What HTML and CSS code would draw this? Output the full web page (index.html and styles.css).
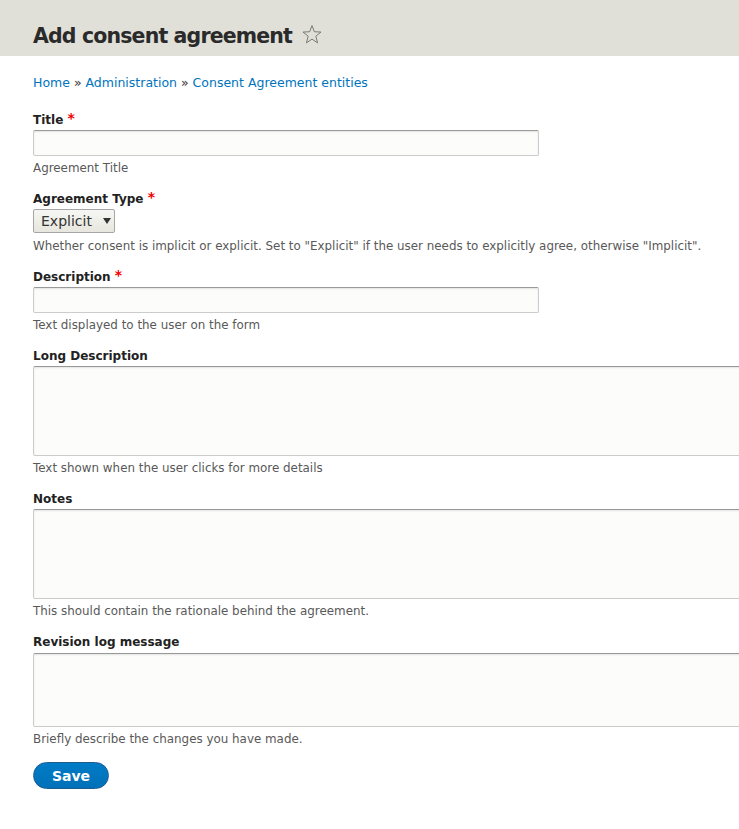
FILE: index.html
```html
<!DOCTYPE html>
<html lang="en">
<head>
<meta charset="utf-8">
<title>Add consent agreement</title>
<link rel="stylesheet" href="styles.css">
</head>
<body>
<header class="page-header">
  <h1 class="page-title">Add consent agreement <svg class="star" width="20" height="19" viewBox="0 0 20 19" aria-hidden="true"><polygon points="10,0.6 12.35,6.76 19.03,7.06 13.8,11.24 15.58,17.9 10,14.1 4.42,17.9 6.2,11.24 0.97,7.06 7.65,6.76" fill="none" stroke="#7a7a74" stroke-width="1" stroke-linejoin="miter"/></svg></h1>
</header>
<main class="content">
  <nav class="breadcrumb"><a href="#">Home</a> » <a href="#">Administration</a> » <a href="#">Consent Agreement entities</a></nav>
  <form class="form">
    <div class="form-item">
      <label class="label">Title <span class="req">*</span></label>
      <input class="text-input" type="text">
      <div class="desc">Agreement Title</div>
    </div>
    <div class="form-item">
      <label class="label">Agreement Type <span class="req">*</span></label>
      <div class="select"><span>Explicit</span><span class="arrow"></span></div>
      <div class="desc desc-after-select">Whether consent is implicit or explicit. Set to "Explicit" if the user needs to explicitly agree, otherwise "Implicit".</div>
    </div>
    <div class="form-item">
      <label class="label">Description <span class="req">*</span></label>
      <input class="text-input" type="text">
      <div class="desc">Text displayed to the user on the form</div>
    </div>
    <div class="form-item">
      <label class="label">Long Description</label>
      <textarea class="textarea tall"></textarea>
      <div class="desc">Text shown when the user clicks for more details</div>
    </div>
    <div class="form-item">
      <label class="label">Notes</label>
      <textarea class="textarea tall"></textarea>
      <div class="desc">This should contain the rationale behind the agreement.</div>
    </div>
    <div class="form-item">
      <label class="label label-last">Revision log message</label>
      <textarea class="textarea short"></textarea>
      <div class="desc">Briefly describe the changes you have made.</div>
    </div>
    <button class="save" type="button">Save</button>
  </form>
</main>
</body>
</html>
```
FILE: styles.css
```css
html, body {
  margin: 0;
  padding: 0;
  overflow: hidden;
  background: #fff;
  font-family: "DejaVu Sans", Verdana, sans-serif;
  color: #222;
}
.page-header {
  background: #e0e0d8;
  height: 56px;
  padding: 0 33px;
  box-sizing: border-box;
}
.page-title {
  margin: 0;
  padding-top: 21px;
  font-size: 20.5px;
  letter-spacing: -0.85px;
  font-weight: bold;
  color: #2a2a2a;
  line-height: 30px;
}
.star {
  vertical-align: -1px;
  margin-left: 4px;
}
.content {
  padding: 0 0 0 33px;
}
.breadcrumb {
  margin-top: 18px;
  font-size: 12.5px;
  line-height: 18px;
  color: #333;
}
.breadcrumb a {
  color: #0074bd;
  text-decoration: none;
}
.form {
  margin-top: 19px;
}
.form-item {
  margin-bottom: 14px;
}
.label {
  display: block;
  box-sizing: border-box;
  font-size: 12px;
  font-weight: bold;
  line-height: 16px;
  height: 17px;
  padding-top: 1px;
  margin-bottom: 2px;
  color: #222;
}
.label-last {
  margin-bottom: 3px;
}
.req {
  color: #e00;
  font-size: 14px;
  line-height: 0;
  vertical-align: 1px;
}
.text-input, .textarea {
  display: block;
  box-sizing: border-box;
  border: 1px solid #ccc;
  border-top-color: #999;
  border-radius: 2px;
  background: #fcfcfa;
  box-shadow: inset 0 1px 2px rgba(0,0,0,0.1);
  margin: 0;
  padding: 0;
}
.text-input {
  width: 506px;
  height: 26px;
}
.textarea {
  width: 740px;
  resize: none;
}
.tall { height: 90px; }
.short { height: 74px; }
.desc {
  font-size: 11.9px;
  line-height: 16px;
  color: #595959;
  margin-top: 4px;
}
.desc-after-select {
  margin-top: 5px;
}
.select {
  display: flex;
  align-items: center;
  box-sizing: border-box;
  height: 24px;
  width: 82px;
  padding: 0 0 0 7px;
  border: 1px solid #a6a6a6;
  border-radius: 2px;
  background: linear-gradient(#f6f6f3, #e7e7df);
  font-size: 14px;
  color: #333;
  gap: 11px;
}
.arrow {
  width: 0;
  height: 0;
  border-left: 4px solid transparent;
  border-right: 4px solid transparent;
  border-top: 6px solid #333;
}
.save {
  display: block;
  margin-top: 15px;
  width: 76px;
  height: 27px;
  border: 1px solid #1e5c90;
  border-radius: 20px;
  background: linear-gradient(#007bc6, #0071b8);
  color: #fff;
  font-family: "DejaVu Sans", Verdana, sans-serif;
  font-size: 14px;
  font-weight: bold;
  padding: 0;
}
```
